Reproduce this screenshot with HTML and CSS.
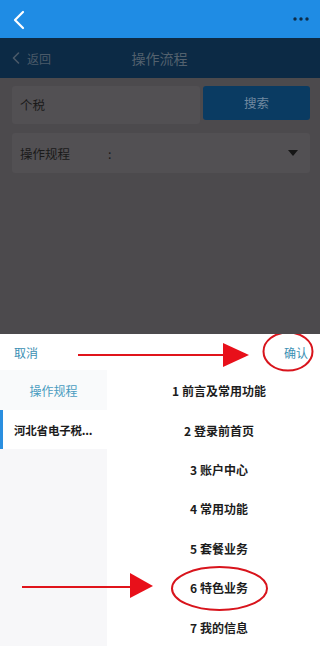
FILE: index.html
```html
<!DOCTYPE html>
<html lang="zh">
<head>
<meta charset="utf-8">
<title>操作流程</title>
<link rel="stylesheet" href="styles.css">
</head>
<body>
<div class="app">
  <header class="topbar">
    <svg class="tb-back" width="14" height="20" viewBox="0 0 14 20"><path d="M11 2 L3 10 L11 18" fill="none" stroke="#fff" stroke-width="2.2" stroke-linecap="round" stroke-linejoin="round"/></svg>
    <svg class="tb-more" width="16" height="4" viewBox="0 0 16 4"><circle cx="2" cy="2" r="1.7" fill="#0d2b47"/><circle cx="8" cy="2" r="1.7" fill="#0d2b47"/><circle cx="14" cy="2" r="1.7" fill="#0d2b47"/></svg>
  </header>
  <nav class="navbar">
    <div class="nav-back">
      <svg width="8" height="12" viewBox="0 0 8 12"><path d="M6.5 1 L1.5 6 L6.5 11" fill="none" stroke="#4b5a69" stroke-width="1.6" stroke-linecap="round" stroke-linejoin="round"/></svg>
      <span>返回</span>
    </div>
    <div class="nav-title">操作流程</div>
  </nav>
  <main class="content">
    <div class="search-row">
      <div class="search-input">个税</div>
      <div class="search-btn">搜索</div>
    </div>
    <div class="select">
      <span class="select-label">操作规程</span>
      <span class="select-colon">:</span>
      <span class="select-caret"></span>
    </div>
  </main>
  <section class="sheet">
    <div class="sheet-head">
      <span class="sheet-action">取消</span>
      <span class="sheet-action">确认</span>
    </div>
    <div class="sheet-body">
      <div class="side">
        <div class="side-title">操作规程</div>
        <div class="side-item active">河北省电子税...</div>
      </div>
      <ul class="list">
        <li>1 前言及常用功能</li>
        <li>2 登录前首页</li>
        <li>3 账户中心</li>
        <li>4 常用功能</li>
        <li>5 套餐业务</li>
        <li>6 特色业务</li>
        <li>7 我的信息</li>
      </ul>
    </div>
    <svg class="marks" width="320" height="312" viewBox="0 334 320 312">
      <line x1="78" y1="355" x2="226" y2="355" stroke="#e0141b" stroke-width="2.2"/>
      <polygon points="223,343 249,355 223,367" fill="#e8101a"/>
      <ellipse cx="288" cy="351.5" rx="24.5" ry="19" fill="none" stroke="#d8141c" stroke-width="2"/>
      <line x1="22" y1="587" x2="132" y2="587" stroke="#e0141b" stroke-width="2.2"/>
      <polygon points="130,573 153,586 130,598" fill="#e8101a"/>
      <ellipse cx="219.5" cy="588.5" rx="47.5" ry="21.5" fill="none" stroke="#d8141c" stroke-width="2"/>
    </svg>
  </section>
</div>
</body>
</html>
```

FILE: styles.css
```css
* { box-sizing: border-box; margin: 0; padding: 0; }
html, body { width: 320px; height: 646px; overflow: hidden; }
body {
  font-family: "Noto Sans CJK SC", "Noto Sans", sans-serif;
  background: #4c4a4d;
}
.app { display: flex; flex-direction: column; height: 646px; }

.topbar {
  height: 38px;
  background: #1f8ce4;
  display: flex;
  align-items: center;
  justify-content: space-between;
  padding: 0 11px 0 12px;
  flex: none;
}
.tb-back { margin-top: 1px; }

.navbar {
  height: 40px;
  background: #0c2a45;
  display: flex;
  align-items: center;
  flex: none;
}
.nav-back {
  display: flex;
  align-items: center;
  gap: 7px;
  padding-left: 12px;
  color: #4b5a69;
  font-size: 12px;
}
.nav-title {
  flex: 1;
  text-align: center;
  margin-left: -52px;
  color: #53616e;
  font-size: 14px;
}

.content {
  flex: 1;
  padding: 8px 10px 0 12px;
  background: #4c4a4d;
}
.search-row { display: flex; gap: 3px; align-items: flex-start; }
.search-input {
  width: 188px;
  height: 38px;
  background: #525053;
  border-radius: 3px;
  color: #1a1a1a;
  font-size: 12.5px;
  line-height: 38px;
  padding-left: 8px;
}
.search-btn {
  width: 107px;
  height: 34px;
  background: #0a3b62;
  border-radius: 3px;
  color: #7189a0;
  font-size: 12.5px;
  line-height: 34px;
  text-align: center;
}
.select {
  margin-top: 9px;
  width: 298px;
  height: 40px;
  background: #525053;
  border-radius: 3px;
  display: flex;
  align-items: center;
  padding: 0 12px 0 8px;
  font-size: 12.5px;
  color: #1a1a1a;
}
.select-label { width: 88px; }
.select-colon { flex: 1; }
.select-caret {
  width: 0; height: 0;
  border-left: 5px solid transparent;
  border-right: 5px solid transparent;
  border-top: 6px solid #161616;
}

.sheet {
  height: 312px;
  background: #fff;
  flex: none;
  position: relative;
  display: flex;
  flex-direction: column;
}
.sheet-head {
  height: 38px;
  display: flex;
  justify-content: space-between;
  align-items: center;
  padding: 0 12px 0 14px;
  font-size: 12px;
  color: #3b8fb3;
}
.sheet-body { flex: 1; display: flex; }
.side {
  width: 107px;
  background: #f7f7f9;
  flex: none;
}
.side-title {
  height: 40px;
  line-height: 42px;
  text-align: center;
  font-size: 12px;
  color: #4a9cc0;
  background: #f9fafb;
}
.side-item {
  height: 39px;
  line-height: 41px;
  font-size: 11.5px;
  font-weight: bold;
  color: #1c1c1c;
  padding-left: 14px;
  white-space: nowrap;
  letter-spacing: -0.2px;
}
.side-item.active {
  background: #fff;
  border-left: 3px solid #2a8fe0;
  padding-left: 11px;
}
.list {
  flex: 1;
  list-style: none;
  padding-left: 11px;
}
.list li {
  height: 39.4px;
  line-height: 42px;
  text-align: center;
  font-size: 12px;
  font-weight: bold;
  color: #1c1c1c;
}
.marks {
  position: absolute;
  left: 0;
  top: 0;
  pointer-events: none;
}
```
